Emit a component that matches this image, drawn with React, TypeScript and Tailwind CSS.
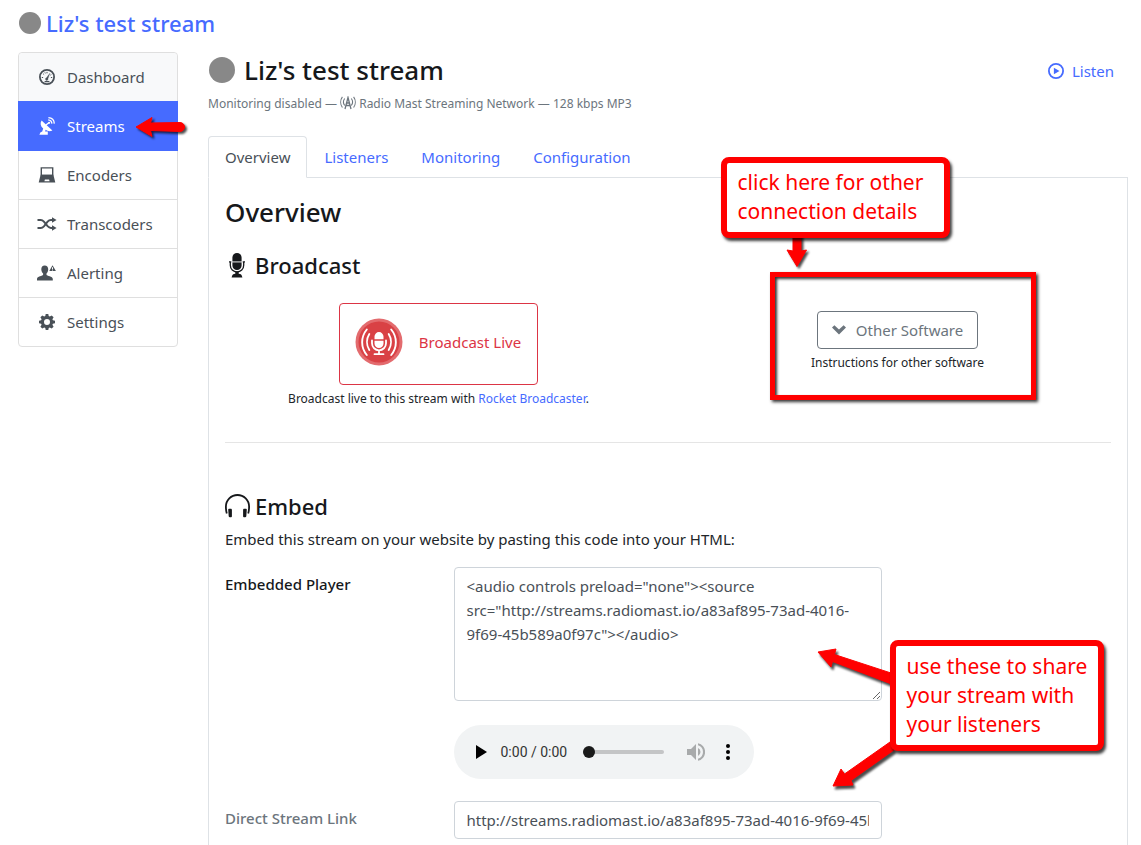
import type { ReactNode } from "react";

const STREAM_URL = "http://streams.radiomast.io/a83af895-73ad-4016-9f69-45b589a0f97c";
const EMBED_CODE = `<audio controls preload="none"><source src="${STREAM_URL}"></audio>`;

function GaugeIcon() {
  return (
    <svg viewBox="0 0 16 16" className="size-4" fill="none" stroke="currentColor" aria-hidden="true">
      <circle cx="8" cy="8" r="7.1" strokeWidth="1.8" />
      <path d="M2.800 8.500h1.300M4.200 4.800l.9.800M8 2.900v1.400M5.900 3.400l.4 1M13.200 8.500h-1.300M12.300 5.600l-.9.500" strokeWidth="1" />
      <path d="M10.900 4.200 9 9.600a1.300 1.300 0 1 1-1.500-.8z" fill="currentColor" strokeWidth=".3" />
      <path d="M5.600 12.600h4.800" strokeWidth="1.300" />
    </svg>
  );
}

function DishIcon() {
  return (
    <svg viewBox="0 0 16 18" className="h-[18px] w-4" fill="currentColor" aria-hidden="true">
      <path d="M2.600 3.600 13.400 13.400c-2.200 1.200-4.800 1-6.800-.6l-.5 1.600 2.700.2v3.200H.4l.9-2.200 1.900-1.100 1-2.900C1.400 9.300.9 6.200 2.600 3.600z" />
      <path d="m6.800 8 3.400-2.400" stroke="currentColor" strokeWidth="1.300" />
      <circle cx="10.200" cy="5.800" r="1" />
      <path d="M9.200 2.900c2 .2 3.500 1.600 3.700 3.700M9.400.7c3.300.2 5.700 2.600 5.900 5.900" fill="none" stroke="currentColor" strokeWidth="1.300" />
    </svg>
  );
}

function LaptopIcon() {
  return (
    <svg viewBox="0 0 18 16" className="h-4 w-[18px]" fill="currentColor" aria-hidden="true">
      <path fillRule="evenodd" d="M2.600.2h12.800v8.400H2.600zM4 1.500v6.300h10V1.500z" />
      <path fillRule="evenodd" d="M2.600 7.700h12.800l1.900 7.700H.7zM6.900 12.500l-.5 1.700h5.200l-.5-1.700z" />
    </svg>
  );
}

function ShuffleIcon() {
  return (
    <svg viewBox="0 0 20 14" className="h-[14px] w-5" fill="none" stroke="currentColor" strokeWidth="2" aria-hidden="true">
      <path d="M.5 3h3.200c1.400 0 2.300.7 3.200 1.700l3.700 4.500c.9 1 1.900 1.800 3.300 1.800h2.400M.5 11h3.200c1.400 0 2.300-.7 3.200-1.700l3.700-4.600C11.500 3.700 12.500 3 13.900 3h2.400" />
      <path d="M15 .2 19.600 3 15 5.800zM15 8.200l4.600 2.800-4.600 2.800z" fill="currentColor" stroke="none" />
    </svg>
  );
}

function AlertUserIcon() {
  return (
    <svg viewBox="0 0 19 16" className="h-4 w-[19px]" fill="currentColor" aria-hidden="true">
      <path d="M7.700.4c2.200 0 3.500 1.500 3.500 3.800 0 1.700-.7 3.300-1.700 4.300v1.300c.3 1.300 6.300 1.300 6.300 4.300v1.300H0v-1.300c0-3 5.800-3 6.100-4.300V8.500c-1-1-1.800-2.600-1.800-4.300C4.300 1.900 5.500.4 7.700.4z" />
      <path fillRule="evenodd" d="M15.500.2 18.900 6h-6.600zM15 2.300v1.800h1V2.300zm0 2.300v.8h1v-.8z" />
    </svg>
  );
}

function GearIcon() {
  return (
    <svg viewBox="0 0 16 16" className="size-4" fill="currentColor" aria-hidden="true">
      <path fillRule="evenodd" d="M6.700 0h2.600l.4 2.100 1.100.5L12.700 1.400l1.900 1.900-1.200 1.900.5 1.100 2.100.4v2.600l-2.100.4-.5 1.100 1.200 1.900-1.900 1.900-1.900-1.200-1.100.5-.4 2.100H6.700l-.4-2.100-1.100-.5-1.900 1.200-1.900-1.900 1.200-1.900-.5-1.100L0 9.300V6.700l2.100-.4.5-1.100L1.400 3.300l1.900-1.900 1.900 1.200 1.100-.5zM8 5a3 3 0 1 0 0 6 3 3 0 0 0 0-6z" />
    </svg>
  );
}

function MastIcon() {
  return (
    <svg viewBox="0 0 16 14" className="inline-block h-[14px] w-4 align-[-2px]" fill="none" stroke="currentColor" strokeWidth="1.1" aria-hidden="true">
      <path d="M5 13 8 1.500 11 13M6 9.500h4M6.700 7h2.600" strokeWidth="1.300" />
      <path d="M4.700 2.500c-1.500 2-1.500 5 0 7M2.400.9c-2.200 3-2.200 7.500 0 10.600M11.300 2.500c1.500 2 1.500 5 0 7M13.600.9c2.200 3 2.200 7.500 0 10.600" />
    </svg>
  );
}

function PlayCircleIcon() {
  return (
    <svg viewBox="0 0 16 16" className="size-4" aria-hidden="true">
      <circle cx="8" cy="8" r="7.100" fill="none" stroke="currentColor" strokeWidth="1.800" />
      <path d="M5.900 4.800v6.400L11.500 8z" fill="currentColor" />
    </svg>
  );
}

function MicIcon() {
  return (
    <svg viewBox="0 0 16 25" className="h-[25px] w-4" fill="currentColor" aria-hidden="true">
      <path d="M3.400 8.300V4.600a4.600 4.600 0 0 1 9.200 0v3.700zM3.400 9.500h9.200v3a4.600 4.600 0 0 1-9.200 0z" />
      <path d="M3.400 8.200h9.200v1.400H3.400z" opacity=".35" />
      <path d="M1.300 8.500v3.800a6.700 6.700 0 0 0 13.400 0V8.500M0 8.900h2.300M13.700 8.900H16" fill="none" stroke="currentColor" strokeWidth="1.300" />
      <path d="M6.300 18.500h3.400v2.300c2 .2 3.200.8 3.700 3.600H2.600c.5-2.800 1.700-3.400 3.700-3.600z" />
    </svg>
  );
}

function HeadphonesIcon() {
  return (
    <svg viewBox="0 0 25 24" className="h-6 w-[25px]" fill="currentColor" aria-hidden="true">
      <path d="M1.800 19.500C.9 16.500.9 14.800.9 12.600a11.600 11.600 0 0 1 23.200 0c0 2.200 0 3.900-.9 6.900" fill="none" stroke="currentColor" strokeWidth="1.800" />
      <path d="M3.200 15.600c0-.6.500-.9 1.200-.9h1.300c.7 0 1.200.4 1.200 1.100v6.400c0 .7-.5 1.100-1.200 1.100H4.900c-.7 0-1.100-.4-1.200-1.100zM21.800 15.600c0-.6-.5-.9-1.200-.9h-1.300c-.7 0-1.200.4-1.200 1.100v6.400c0 .7.500 1.100 1.200 1.100h.8c.7 0 1.100-.4 1.200-1.100z" />
    </svg>
  );
}

function BroadcastBadge() {
  return (
    <svg viewBox="0 0 48 48" className="size-12" fill="none" stroke="#fff" strokeLinecap="round" aria-hidden="true">
      <circle cx="24" cy="24" r="23.500" fill="#e36b6e" stroke="none" />
      <circle cx="24" cy="24" r="20.500" fill="#d94145" stroke="none" />
      <path d="M19.500 21.300V18.600a4.500 4.500 0 0 1 9 0v2.700zM19.500 22.800h9v2.800a4.500 4.500 0 0 1-9 0z" fill="#fff" stroke="none" />
      <path d="M17 22.500v2.800a7 7 0 0 0 14 0v-2.800M24 32.500v3.300M19.500 36.200h9" strokeWidth="1.800" />
      <path d="M14.300 16c-3 4.800-3 11.200 0 16M33.700 16c3 4.800 3 11.200 0 16" strokeWidth="1.900" />
      <path d="M11.800 11.500c-6.200 7.500-6.200 18 0 25.500M36.200 11.500c6.200 7.500 6.200 18 0 25.500" strokeWidth="1.900" />
    </svg>
  );
}

function ChevronIcon() {
  return (
    <svg viewBox="0 0 14 10" className="h-[10px] w-[14px]" fill="currentColor" aria-hidden="true">
      <path d="M0 2.600 2.400.3 7 4.600 11.600.3 14 2.600 7 9.600z" />
    </svg>
  );
}

const NAV = [
  { label: "Dashboard", icon: <GaugeIcon /> },
  { label: "Streams", icon: <DishIcon />, active: true },
  { label: "Encoders", icon: <LaptopIcon /> },
  { label: "Transcoders", icon: <ShuffleIcon /> },
  { label: "Alerting", icon: <AlertUserIcon /> },
  { label: "Settings", icon: <GearIcon /> },
];

const TABS = ["Overview", "Listeners", "Monitoring", "Configuration"];

function Sidebar() {
  return (
    <nav className="w-40 shrink-0">
      <ul className="rounded border border-[#dfdfdf] text-[#495057]">
        {NAV.map((item, i) => (
          <li key={item.label} className={item.active ? "relative" : ""}>
            <a
              href="#"
              className={
                item.active
                  ? "-mx-px flex h-[50px] items-center bg-[#466bff] pl-[18px] text-white"
                  : i === 0
                    ? "flex h-12 items-center rounded-t bg-[#f8f9fa] pl-[17px]"
                    : i === 2
                      ? "flex h-12 items-center pl-[17px]"
                      : "flex h-[49px] items-center border-t border-[#dfdfdf] pl-[17px]"
              }
            >
              <span className="mr-2.5 flex w-[21px] justify-center">{item.icon}</span>
              {item.label}
            </a>
            {item.active && (
              <svg viewBox="0 0 60 30" className="pointer-events-none absolute top-[11px] left-[113px] h-[30px] w-[60px] drop-shadow-[2px_2px_1px_rgba(0,0,0,0.7)]" aria-hidden="true">
                <path d="M4 15 20 5.500 18.500 11 48 10.500a4.500 4.500 0 0 1 0 9L18.500 18.500l1.500 6z" fill="#f00" stroke="#f00" strokeLinejoin="round" />
              </svg>
            )}
          </li>
        ))}
      </ul>
    </nav>
  );
}

function Callout({ className, children }: { className: string; children: ReactNode }) {
  return (
    <div
      className={`absolute rounded-lg border-[6px] border-[#f00] bg-white pl-[11px] text-[21px] leading-[29px] text-[#f00] shadow-[2px_3px_3px_rgba(0,0,0,0.75)] ${className}`}
    >
      {children}
    </div>
  );
}

function AudioPlayer() {
  return (
    <div className="mt-6 flex h-[54px] w-[300px] items-center rounded-full bg-[#f1f3f4]">
      <button type="button" aria-label="Play" className="ml-[22px] p-0">
        <svg viewBox="0 0 11 14" className="h-[14px] w-[11px]" aria-hidden="true">
          <path d="M0 0v14l11-7z" />
        </svg>
      </button>
      <span className="ml-3.5 w-[82px] font-['Roboto',sans-serif] text-sm text-[#333]">0:00 / 0:00</span>
      <input
        type="range"
        aria-label="Position"
        min={0}
        max={100}
        defaultValue={0}
        className="h-3 w-[81px] appearance-none bg-transparent [&::-webkit-slider-runnable-track]:h-1 [&::-webkit-slider-runnable-track]:rounded-full [&::-webkit-slider-runnable-track]:bg-[#c4c5c6] [&::-webkit-slider-thumb]:-mt-1 [&::-webkit-slider-thumb]:size-3 [&::-webkit-slider-thumb]:appearance-none [&::-webkit-slider-thumb]:rounded-full [&::-webkit-slider-thumb]:bg-[#1a1a1a]"
      />
      <button type="button" aria-label="Mute" className="ml-[23px]">
        <svg viewBox="0 0 18 18" className="size-[18px]" fill="#a8aaab" aria-hidden="true">
          <path d="M0 6v6h4l5 5V1L4 6zM13.500 9A4.500 4.500 0 0 0 11 5v8a4.500 4.500 0 0 0 2.500-4zM11 .2v2.100a7 7 0 0 1 0 13.400v2.100a9 9 0 0 0 0-17.600z" />
        </svg>
      </button>
      <button type="button" aria-label="More options" className="ml-[21px]">
        <svg viewBox="0 0 4 16" className="h-4 w-1" aria-hidden="true">
          <circle cx="2" cy="2" r="2" />
          <circle cx="2" cy="8" r="2" />
          <circle cx="2" cy="14" r="2" />
        </svg>
      </button>
    </div>
  );
}

export default function App() {
  return (
    <div className="flex min-h-screen flex-col bg-white pr-[13px] pl-[18px] font-['Noto_Sans',sans-serif] text-[15px] text-[#212529]">
      <header className="flex h-[52px] items-center pb-1.5">
        <a href="#" className="flex items-center text-[22px] font-medium text-[#466bff]">
          <span className="mr-[5px] ml-px size-[22px] rounded-full bg-[#888]" />
          Liz's test stream
        </a>
      </header>

      <div className="flex flex-1 items-stretch gap-[30px]">
        <Sidebar />

        <main className="flex min-w-0 flex-1 flex-col">
          <div className="flex h-9 items-center justify-between">
            <h1 className="flex items-center text-[26px] font-medium text-[#16181b]">
              <span className="mr-[9px] ml-px size-[26px] rounded-full bg-[#888]" />
              Liz's test stream
            </h1>
            <a href="#" className="mt-0.5 mr-3.5 flex items-center gap-2 text-[#466bff]">
              <PlayCircleIcon />
              Listen
            </a>
          </div>
          <p className="mt-1.5 mb-[22px] h-5 text-xs leading-5 text-[#6c757d]">
            Monitoring disabled — <MastIcon /> Radio Mast Streaming Network — 128 kbps MP3
          </p>

          <div role="tablist" className="flex h-[42px] border-b border-[#dee2e6]">
            {TABS.map((tab, i) => (
              <button
                key={tab}
                type="button"
                role="tab"
                aria-selected={i === 0}
                className={
                  i === 0
                    ? "h-[42px] rounded-t border border-b-white border-[#dee2e6] bg-white px-4 text-[#495057]"
                    : "h-[42px] border border-transparent pr-[15px] pl-4 text-[#466bff]"
                }
              >
                {tab}
              </button>
            ))}
          </div>

          <section className="flex-1 border-x border-[#dee2e6] px-4 pt-[18px]">
            <h2 className="text-[26px] leading-8 font-medium text-[#16181b]">Overview</h2>
            <h3 className="mt-[21px] flex h-8 items-center pl-1 text-[22px] font-medium text-[#16181b]">
              <MicIcon />
              <span className="ml-2.5">Broadcast</span>
            </h3>

            <div className="-mx-4 mt-[22px] grid grid-cols-2 text-center text-xs">
              <div className="flex flex-col items-center">
                <button type="button" className="flex h-[82px] items-center rounded border border-[#dc3545] pr-4 pb-1 pl-[15px] text-[15px] text-[#dc3545]">
                  <BroadcastBadge />
                  <span className="ml-4">Broadcast Live</span>
                </button>
                <p className="mt-1 leading-5">
                  Broadcast live to this stream with <a href="#" className="text-[#466bff]">Rocket Broadcaster</a>.
                </p>
              </div>
              <div className="relative flex flex-col items-center pt-2">
                <button type="button" className="flex h-[38px] items-center gap-2.5 rounded border border-[#6c757d] px-3.5 text-[15px] text-[#6c757d]">
                  <ChevronIcon />
                  Other Software
                </button>
                <p className="mt-1 leading-5">Instructions for other software</p>

                <div className="pointer-events-none absolute -top-[31px] left-1/2 h-32 w-[266px] -translate-x-32 border-[5px] border-[#f00] shadow-[2px_2px_3px_rgba(0,0,0,0.8),inset_2px_2px_3px_rgba(0,0,0,0.8)]" />
                <svg viewBox="0 0 30 44" className="pointer-events-none absolute -top-[76px] left-1/2 h-11 w-[30px] -translate-x-[116px] drop-shadow-[2px_2px_1px_rgba(0,0,0,0.7)]" aria-hidden="true">
                  <path d="M11 0h8v24l5.500-1L15 39.500 5 23l6 1z" fill="#f00" stroke="#f00" strokeLinejoin="round" />
                </svg>
                <Callout className="-top-[146px] left-1/2 w-[229px] -translate-x-[177px] pt-[5px] pb-1.5 text-left">
                  click here for other
                  <br />
                  connection details
                </Callout>
              </div>
            </div>

            <hr className="mt-[33px] border-[#e5e5e5]" />

            <h3 className="mt-[47px] flex h-8 items-center text-[22px] font-medium text-[#16181b]">
              <HeadphonesIcon />
              <span className="ml-[5px]">Embed</span>
            </h3>
            <p className="mt-[5px] leading-6">Embed this stream on your website by pasting this code into your HTML:</p>

            <div className="-mx-4 mt-4 grid grid-cols-4">
              <label htmlFor="embed" className="pt-[5px] pl-4 leading-6 font-medium text-[#16181b]">
                Embedded Player
              </label>
              <div className="relative col-span-2 pr-4 pl-[15px]">
                <textarea
                  id="embed"
                  readOnly
                  spellCheck={false}
                  defaultValue={EMBED_CODE}
                  className="block h-[134px] w-full rounded border border-[#ced4da] px-3 py-1.5 leading-6 text-[#495057]"
                />
                <AudioPlayer />
                <svg viewBox="0 0 90 160" className="pointer-events-none absolute top-[74px] right-0.5 h-40 w-[90px] drop-shadow-[2px_3px_1px_rgba(0,0,0,0.7)]" fill="#f00" stroke="#f00" strokeLinejoin="round" aria-hidden="true">
                  <path d="M12 11 30 8l-1.500 5.500L88 33v11L26.500 20.500 25 26z" />
                  <path d="M27 145 35 128l3.500 5L84 101l4 8-43 30.500L47 144z" />
                </svg>
                <Callout className="top-[73px] left-full w-[214px] -translate-x-2 pt-[6px] pb-1.5">
                  use these to share
                  <br />
                  your stream with
                  <br />
                  your listeners
                </Callout>
              </div>
            </div>

            <div className="-mx-4 mt-[22px] grid grid-cols-4 pb-1.5">
              <label htmlFor="direct" className="pt-[5px] pl-4 leading-6 font-medium text-[#6c757d]">
                Direct Stream Link
              </label>
              <div className="col-span-2 pr-4 pl-[15px]">
                <input
                  id="direct"
                  type="text"
                  readOnly
                  defaultValue={STREAM_URL}
                  className="block h-[38px] w-full rounded border border-[#ced4da] px-3 text-[#495057]"
                />
              </div>
            </div>
          </section>
        </main>
      </div>
    </div>
  );
}
